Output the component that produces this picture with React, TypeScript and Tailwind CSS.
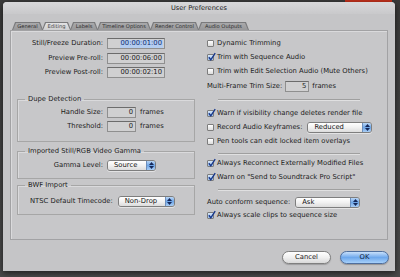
import React from "react";

function Check({ checked }: { checked: boolean }) {
  return (
    <span
      className={`relative inline-block w-[7px] h-[7px] shrink-0 rounded-[1px] border border-[#7d7d7d] ${
        checked ? "bg-gradient-to-b from-[#d6e6f8] to-[#9fc2ec]" : "bg-gradient-to-b from-[#ffffff] to-[#dcdcdc]"
      }`}
    >
      {checked && (
        <svg className="absolute left-[-1px] top-[-3px]" width="10" height="10" viewBox="0 0 10 10">
          <path d="M1.8 5.2 L3.8 7.8 L8.2 1.2" fill="none" stroke="#17378a" strokeWidth="1.4" />
        </svg>
      )}
    </span>
  );
}

function CheckRow({ checked, label, h = "h-[14px]" }: { checked: boolean; label: string; h?: string }) {
  return (
    <div className={`flex items-center gap-[3px] ${h}`}>
      <Check checked={checked} />
      <span className="whitespace-nowrap">{label}</span>
    </div>
  );
}

function Field({ w, value, selected = false }: { w: string; value: string; selected?: boolean }) {
  return (
    <div
      className={`${w} h-[11px] flex items-center justify-end pr-[1px] bg-[#d0d0d1] border border-[#8f8f8f] border-t-[#6c6c6c] leading-none`}
    >
      {selected ? (
        <span className="bg-[#b4cdf0] text-[#0f2c70] px-[1px] h-[8px] flex items-center">{value}</span>
      ) : (
        <span className="px-[1px]">{value}</span>
      )}
    </div>
  );
}

function Popup({ w, value }: { w: string; value: string }) {
  return (
    <div
      className={`${w} h-[11px] flex rounded-[3px] border border-[#7e7e7e] overflow-hidden leading-none shadow-[0_1px_0_rgba(255,255,255,0.5)]`}
    >
      <div className="flex-1 flex items-center pl-[6px] bg-gradient-to-b from-[#ffffff] via-[#f1f1f1] to-[#dcdcdc] text-[#111]">
        {value}
      </div>
      <div className="w-[9px] flex flex-col items-center justify-center gap-[1px] bg-gradient-to-b from-[#b9d6f6] via-[#6fa6e6] to-[#a9cdf4] border-l border-[#6d8fbd]">
        <svg width="5" height="3" viewBox="0 0 5 3">
          <path d="M0 3 L2.5 0 L5 3 Z" fill="#14285a" />
        </svg>
        <svg width="5" height="3" viewBox="0 0 5 3">
          <path d="M0 0 L2.5 3 L5 0 Z" fill="#14285a" />
        </svg>
      </div>
    </div>
  );
}

function Tab({ label, w, active = false }: { label: string; w: string; active?: boolean }) {
  return (
    <div
      className={`${w} h-[8px] -mr-[1px] bg-[#7a7a7c] [clip-path:polygon(3px_0,calc(100%-3px)_0,100%_100%,0_100%)] p-[1px] pb-0`}
    >
      <div
        className={`h-full w-full [clip-path:polygon(3px_0,calc(100%-3px)_0,100%_100%,0_100%)] flex items-center justify-center text-[5.2px] leading-none whitespace-nowrap ${
          active ? "bg-gradient-to-b from-[#e2e2e3] to-[#cfcfd1] text-[#4a4a4a]" : "bg-gradient-to-b from-[#a9a9ab] to-[#98989a] text-[#2e2e2e]"
        }`}
      >
        {label}
      </div>
    </div>
  );
}

function Group({ title, children, cls }: { title: string; children: React.ReactNode; cls: string }) {
  return (
    <fieldset className={`ml-[6px] w-[178px] border border-[#a6a6a6] shadow-[inset_1px_1px_0_rgba(255,255,255,0.35)] ${cls}`}>
      <legend className="ml-[7px] px-[3px] h-[9px] leading-[9px]">{title}</legend>
      {children}
    </fieldset>
  );
}

function Separator({ h, line }: { h: string; line: string }) {
  return (
    <div className={`${h} flex flex-col`}>
      <div className={`${line}`} />
      <div className="ml-[11px] w-[142px] h-[1px] bg-[#9f9f9f] shadow-[0_1px_0_rgba(255,255,255,0.45)]" />
    </div>
  );
}

export default function App() {
  return (
    <div className="relative w-[400px] h-[277px] overflow-hidden bg-gradient-to-b from-[#3a3a3a] to-[#4a4a4a] font-['DejaVu_Sans',sans-serif] text-[6.8px] text-[#1c1c1c]">
      <div className="absolute left-[345px] top-0 w-[47px] h-[3px] bg-[#c2311c]" />
      <div className="relative ml-[3px] mt-[2px] w-[392px] h-[269px] flex flex-col bg-[#c5c5c7] rounded-t-[4px] shadow-[0_2px_6px_rgba(0,0,0,0.6)]">
        {/* Title bar */}
        <div className="h-[12px] flex items-center justify-center rounded-t-[4px] bg-gradient-to-b from-[#d8d8da] to-[#c9c9cb] text-[#222] text-[6.6px] leading-none">
          User Preferences
        </div>

        {/* Tabs */}
        <div className="mt-[8px] h-[8px] flex pl-[9px]">
          <Tab label="General" w="w-[31px]" />
          <Tab label="Editing" w="w-[29px]" active />
          <Tab label="Labels" w="w-[28px]" />
          <Tab label="Timeline Options" w="w-[54px]" />
          <Tab label="Render Control" w="w-[49px]" />
          <Tab label="Audio Outputs" w="w-[51px]" />
        </div>

        {/* Panel */}
        <div className="mx-[7px] h-[210px] flex border border-[#a2a2a4] shadow-[inset_1px_1px_0_rgba(255,255,255,0.35)] bg-[#c7c7c9]">
          {/* Left column */}
          <div className="w-[189px] flex flex-col">
            <div className="mt-[7px] h-[11px] flex items-center">
              <span className="w-[92px] text-right whitespace-nowrap">Still/Freeze Duration:</span>
              <div className="ml-[4px]">
                <Field w="w-[58px]" value="00:00:01:00" selected />
              </div>
            </div>
            <div className="mt-[4px] h-[11px] flex items-center">
              <span className="w-[92px] text-right whitespace-nowrap">Preview Pre-roll:</span>
              <div className="ml-[4px]">
                <Field w="w-[58px]" value="00:00:06:00" />
              </div>
            </div>
            <div className="mt-[3px] h-[11px] flex items-center">
              <span className="w-[92px] text-right whitespace-nowrap">Preview Post-roll:</span>
              <div className="ml-[4px]">
                <Field w="w-[58px]" value="00:00:02:10" />
              </div>
            </div>

            <Group title="Dupe Detection" cls="mt-[17px] pb-[9px]">
              <div className="mt-[3px] h-[11px] flex items-center">
                <span className="w-[85px] text-right">Handle Size:</span>
                <div className="ml-[4px]">
                  <Field w="w-[29px]" value="0" />
                </div>
                <span className="ml-[4px]">frames</span>
              </div>
              <div className="mt-[3px] h-[11px] flex items-center">
                <span className="w-[85px] text-right">Threshold:</span>
                <div className="ml-[4px]">
                  <Field w="w-[29px]" value="0" />
                </div>
                <span className="ml-[4px]">frames</span>
              </div>
            </Group>

            <Group title="Imported Still/RGB Video Gamma" cls="mt-[5px] pb-[7px]">
              <div className="mt-[4px] h-[11px] flex items-center">
                <span className="w-[85px] text-right">Gamma Level:</span>
                <div className="ml-[4px]">
                  <Popup w="w-[49px]" value="Source" />
                </div>
              </div>
            </Group>

            <Group title="BWF Import" cls="mt-[2px] pb-[7px]">
              <div className="mt-[6px] h-[11px] flex items-center pl-[12px]">
                <span className="whitespace-nowrap">NTSC Default Timecode:</span>
                <div className="ml-[5px]">
                  <Popup w="w-[57px]" value="Non-Drop" />
                </div>
              </div>
            </Group>
          </div>

          {/* Right column */}
          <div className="flex-1 flex flex-col pl-[7px] pt-[5px]">
            <CheckRow checked={false} label="Dynamic Trimming" />
            <CheckRow checked label="Trim with Sequence Audio" />
            <CheckRow checked={false} label="Trim with Edit Selection Audio (Mute Others)" h="h-[15px]" />
            <div className="h-[14px] flex items-center">
              <span className="whitespace-nowrap">Multi-Frame Trim Size:</span>
              <div className="ml-[3px]">
                <Field w="w-[24px]" value="5" />
              </div>
              <span className="ml-[3px]">frames</span>
            </div>
            <Separator h="h-[13px]" line="h-[6px]" />
            <CheckRow checked label="Warn if visibility change deletes render file" />
            <div className="h-[14px] flex items-center">
              <Check checked={false} />
              <span className="ml-[3px] whitespace-nowrap">Record Audio Keyframes:</span>
              <div className="ml-[5px]">
                <Popup w="w-[65px]" value="Reduced" />
              </div>
            </div>
            <CheckRow checked={false} label="Pen tools can edit locked item overlays" />
            <Separator h="h-[9px]" line="h-[5px]" />
            <CheckRow checked label="Always Reconnect Externally Modified Files" h="h-[13px]" />
            <CheckRow checked label={'Warn on "Send to Soundtrack Pro Script"'} />
            <Separator h="h-[12px]" line="h-[5px]" />
            <div className="h-[13px] flex items-center">
              <span className="whitespace-nowrap">Auto conform sequence:</span>
              <div className="ml-[5px]">
                <Popup w="w-[65px]" value="Ask" />
              </div>
            </div>
            <CheckRow checked label="Always scale clips to sequence size" h="h-[12px]" />
          </div>
        </div>

        {/* Buttons */}
        <div className="mt-[11px] flex justify-end gap-[9px] pr-[6px]">
          <div className="w-[49px] h-[13px] rounded-full border border-[#7f7f7f] bg-gradient-to-b from-[#ffffff] via-[#f0f0f0] to-[#d9d9d9] flex items-center justify-center leading-none text-[#1a1a1a] shadow-[0_1px_1px_rgba(0,0,0,0.2)]">
            Cancel
          </div>
          <div className="w-[49px] h-[13px] rounded-full border border-[#4f6f9e] bg-gradient-to-b from-[#c8e0fa] via-[#6ea8ec] to-[#a6d0fa] flex items-center justify-center leading-none text-[#0e1c3a] shadow-[0_1px_1px_rgba(0,0,0,0.25)]">
            OK
          </div>
        </div>
      </div>
    </div>
  );
}
